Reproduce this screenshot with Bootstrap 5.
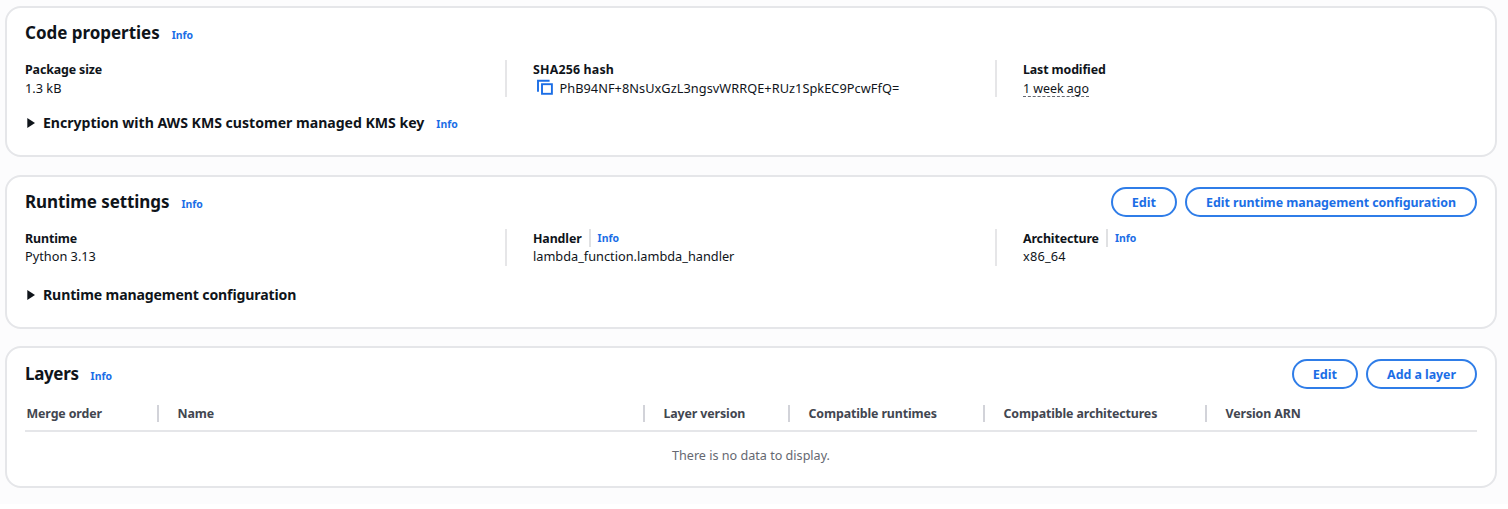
<!DOCTYPE html>
<html lang="en">
<head>
<meta charset="utf-8">
<meta name="viewport" content="width=device-width, initial-scale=1">
<title>Lambda function code</title>
<link href="https://cdn.jsdelivr.net/npm/bootstrap@5.3.0/dist/css/bootstrap.min.css" rel="stylesheet">
<style>
:root{--ink:#0f141a;--link-blue:#1b6ee6;--rule:#e5e6e9}
body{background:#fff;color:var(--ink);font-family:"Noto Sans",sans-serif;font-size:12.75px;line-height:18.5px;overflow:hidden}
.page{background:#fcfcfd;height:504px;padding:6px 11px 0 5px}
.panel{background:#fff;border:2px solid var(--rule);border-radius:16px;padding:0 18px}
.panel-code{height:151px;margin-bottom:18px}
.panel-runtime{height:154px;margin-bottom:17px}
.panel-layers{height:142px}
.panel-head{height:52px;padding-bottom:1px}
.panel-code .panel-head{padding-bottom:3px}
.panel-runtime .panel-head{height:51.5px}
.panel-title{font-size:17px;font-weight:700;letter-spacing:-.03px;line-height:24px;margin:0}
.info{color:var(--link-blue);font-size:10.45px;font-weight:700;text-decoration:none}
.pairs{display:grid;grid-template-columns:480px 490px 1fr}
.pairs>div{height:37px}
.pairs>div+div{border-left:2px solid #e6e6e8;padding-left:26px}
.pairs dt{font-size:12.4px;font-weight:700;letter-spacing:-.12px;line-height:19.5px;height:18.5px}
.pairs dd{margin:0;height:18.5px;line-height:18px;white-space:nowrap}
.pairs .info{border-left:2px solid #e0e1e3;margin-left:7px;padding-left:7px;letter-spacing:0}
.hash{letter-spacing:.05px}
.ago{display:inline-block;font-size:12.4px;border-bottom:1px dashed #656871;height:17px}
.expander{font-size:14.1px;font-weight:700;letter-spacing:-.02px;line-height:20px}
.panel-code .expander{margin-top:15.5px}
.panel-runtime .expander{margin-top:19px}
.expander svg{margin:0 8px 0 2px;flex:none}
.btn-pill{--bs-btn-color:var(--link-blue);--bs-btn-border-color:#2f7de8;--bs-btn-border-width:2px;--bs-btn-padding-y:0;--bs-btn-padding-x:19px;--bs-btn-font-size:12.4px;--bs-btn-font-weight:700;--bs-btn-line-height:27px;--bs-btn-border-radius:15px;--bs-btn-hover-color:#002b66;--bs-btn-hover-bg:#f0fbff;--bs-btn-hover-border-color:#002b66;height:30px;letter-spacing:-.03px}
.btn-edit{--bs-btn-font-size:12.7px;--bs-btn-line-height:26px}
.layers-table{table-layout:fixed;width:100%;border-collapse:separate;border-spacing:0}
.layers-table th{height:32px;padding:0 0 3px 18.5px;border-bottom:2px solid var(--rule);color:#424650;font-size:12.4px;font-weight:700;letter-spacing:-.12px;vertical-align:middle}
.layers-table th:first-child{padding-left:1.5px}
.layers-table th span{display:block;height:17px;line-height:17px;border-right:2px solid #d2d3d9}
.layers-table th:last-child span{border:0}
.layers-table td{padding:15px 0 0;color:#656871;font-size:12.6px;text-align:center}
</style>
</head>
<body>
<main class="page">
  <section class="panel panel-code">
    <div class="panel-head d-flex align-items-center">
      <div class="d-flex align-items-baseline"><h2 class="panel-title">Code properties</h2><a class="info ms-2 ps-1" href="#">Info</a></div>
    </div>
    <dl class="pairs mb-0">
      <div><dt>Package size</dt><dd>1.3 kB</dd></div>
      <div><dt style="letter-spacing:.18px">SHA256 hash</dt><dd class="d-flex hash"><svg width="16" height="17" viewBox="0 0 16 17" class="ms-1 flex-shrink-0" fill="none" stroke="#1b6ee6" stroke-width="1.9"><path d="M1 12.8V1.7h11.6"/><rect x="5" y="5.2" width="9.9" height="9.6"/></svg><span style="margin-left:6.5px">PhB94NF+8NsUxGzL3ngsvWRRQE+RUz1SpkEC9PcwFfQ=</span></dd></div>
      <div><dt>Last modified</dt><dd><span class="ago">1 week ago</span></dd></div>
    </dl>
    <div class="expander d-flex align-items-center">
      <svg width="8" height="10" viewBox="0 0 8 10"><path d="M.3 0 8 5 .3 10z" fill="#0f141a"/></svg>
      <div class="d-flex align-items-baseline"><span>Encryption with AWS KMS customer managed KMS key</span><a class="info ms-2 ps-1" href="#">Info</a></div>
    </div>
  </section>

  <section class="panel panel-runtime">
    <div class="panel-head d-flex align-items-center justify-content-between">
      <div class="d-flex align-items-baseline"><h2 class="panel-title" style="letter-spacing:-.08px">Runtime settings</h2><a class="info ms-2 ps-1" href="#">Info</a></div>
      <div class="d-flex gap-2"><button class="btn btn-pill btn-edit">Edit</button><button class="btn btn-pill">Edit runtime management configuration</button></div>
    </div>
    <dl class="pairs mb-0">
      <div><dt>Runtime</dt><dd>Python 3.13</dd></div>
      <div><dt class="d-flex">Handler<a class="info" href="#">Info</a></dt><dd>lambda_function.lambda_handler</dd></div>
      <div><dt class="d-flex">Architecture<a class="info" href="#">Info</a></dt><dd style="letter-spacing:.2px">x86_64</dd></div>
    </dl>
    <div class="expander d-flex align-items-center">
      <svg width="8" height="10" viewBox="0 0 8 10"><path d="M.3 0 8 5 .3 10z" fill="#0f141a"/></svg>
      <span style="letter-spacing:-.14px">Runtime management configuration</span>
    </div>
  </section>

  <section class="panel panel-layers">
    <div class="panel-head d-flex align-items-center justify-content-between">
      <div class="d-flex align-items-baseline"><h2 class="panel-title" style="letter-spacing:-.35px">Layers</h2><a class="info ms-2 ps-1" href="#">Info</a></div>
      <div class="d-flex gap-2"><button class="btn btn-pill btn-edit">Edit</button><button class="btn btn-pill">Add a layer</button></div>
    </div>
    <table class="layers-table">
      <colgroup><col style="width:134px"><col style="width:486px"><col style="width:145px"><col style="width:195px"><col style="width:222px"><col></colgroup>
      <thead><tr><th><span>Merge order</span></th><th><span>Name</span></th><th><span>Layer version</span></th><th><span>Compatible runtimes</span></th><th><span>Compatible architectures</span></th><th><span>Version ARN</span></th></tr></thead>
      <tbody><tr><td colspan="6">There is no data to display.</td></tr></tbody>
    </table>
  </section>
</main>
<script src="https://cdn.jsdelivr.net/npm/bootstrap@5.3.0/dist/js/bootstrap.bundle.min.js"></script>
</body>
</html>
